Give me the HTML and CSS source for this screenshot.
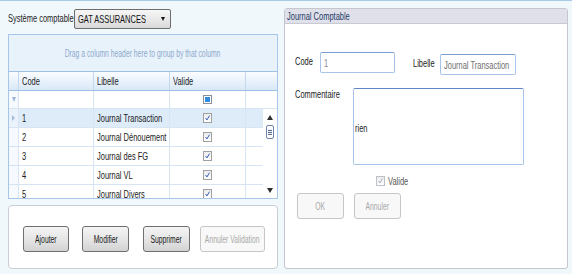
FILE: index.html
```html
<!DOCTYPE html>
<html lang="fr">
<head>
    <meta charset="UTF-8">
    <title>Journal Comptable</title>
    <link rel="stylesheet" href="styles.css">
</head>
<body>
    <div class="page">
        <!-- Left side: system picker, grid, actions -->
        <div class="left">
            <div class="picker">
                <span class="picker-label"><span class="t">Système comptable</span></span>
                <div class="select">
                    <span class="select-text"><span class="t">GAT ASSURANCES</span></span>
                    <span class="caret"></span>
                </div>
            </div>

            <div class="grid">
                <div class="group-panel"><span class="t">Drag a column header here to group by that column</span></div>
                <div class="row head">
                    <div class="ind"></div>
                    <div class="cell"><span class="t">Code</span></div>
                    <div class="cell"><span class="t">Libelle</span></div>
                    <div class="cell"><span class="t">Valide</span></div>
                    <div class="cell"></div>
                </div>
                <div class="row filter">
                    <div class="ind"><span class="funnel"></span></div>
                    <div class="cell"></div>
                    <div class="cell"></div>
                    <div class="cell center"><span class="tri-box"></span></div>
                    <div class="cell"></div>
                </div>
                <div class="body">
                    <div class="rows">
                        <div class="row selected">
                            <div class="ind"><span class="arrow"></span></div>
                            <div class="cell"><span class="t">1</span></div>
                            <div class="cell"><span class="t">Journal Transaction</span></div>
                            <div class="cell center"><span class="check"><svg viewBox="0 0 9 9"><polyline points="2,4.5 3.8,7 7,1.5"/></svg></span></div>
                            <div class="cell"></div>
                        </div>
                        <div class="row">
                            <div class="ind"></div>
                            <div class="cell"><span class="t">2</span></div>
                            <div class="cell"><span class="t">Journal Dénouement</span></div>
                            <div class="cell center"><span class="check"><svg viewBox="0 0 9 9"><polyline points="2,4.5 3.8,7 7,1.5"/></svg></span></div>
                            <div class="cell"></div>
                        </div>
                        <div class="row">
                            <div class="ind"></div>
                            <div class="cell"><span class="t">3</span></div>
                            <div class="cell"><span class="t">Journal des FG</span></div>
                            <div class="cell center"><span class="check"><svg viewBox="0 0 9 9"><polyline points="2,4.5 3.8,7 7,1.5"/></svg></span></div>
                            <div class="cell"></div>
                        </div>
                        <div class="row">
                            <div class="ind"></div>
                            <div class="cell"><span class="t">4</span></div>
                            <div class="cell"><span class="t">Journal VL</span></div>
                            <div class="cell center"><span class="check"><svg viewBox="0 0 9 9"><polyline points="2,4.5 3.8,7 7,1.5"/></svg></span></div>
                            <div class="cell"></div>
                        </div>
                        <div class="row">
                            <div class="ind"></div>
                            <div class="cell"><span class="t">5</span></div>
                            <div class="cell"><span class="t">Journal Divers</span></div>
                            <div class="cell center"><span class="check"><svg viewBox="0 0 9 9"><polyline points="2,4.5 3.8,7 7,1.5"/></svg></span></div>
                            <div class="cell"></div>
                        </div>
                    </div>
                    <div class="scrollbar">
                        <span class="sb-up"></span>
                        <span class="sb-thumb"></span>
                        <span class="sb-fill"></span>
                        <span class="sb-down"></span>
                    </div>
                </div>
            </div>

            <div class="actions">
                <button class="btn b-add"><span class="t">Ajouter</span></button>
                <button class="btn b-edit"><span class="t">Modifier</span></button>
                <button class="btn b-del"><span class="t">Supprimer</span></button>
                <button class="btn b-undo" disabled><span class="t">Annuler Validation</span></button>
            </div>
        </div>

        <!-- Right side: detail form -->
        <div class="panel">
            <div class="panel-title"><span class="t">Journal Comptable</span></div>
            <div class="form">
                <div class="line">
                    <span class="lbl"><span class="t">Code</span></span>
                    <div class="input code"><span class="t">1</span></div>
                    <span class="lbl libelle"><span class="t">Libelle</span></span>
                    <div class="input lib"><span class="t">Journal Transaction</span></div>
                </div>
                <div class="line comment">
                    <span class="lbl"><span class="t">Commentaire</span></span>
                    <div class="textarea"><span class="t">rien</span></div>
                </div>
                <div class="valid">
                    <span class="check dim"><svg viewBox="0 0 9 9"><polyline points="2,4.5 3.8,7 7,1.5"/></svg></span>
                    <span class="t">Valide</span>
                </div>
                <div class="form-buttons">
                    <button class="btn" disabled><span class="t">OK</span></button>
                    <button class="btn" disabled><span class="t">Annuler</span></button>
                </div>
            </div>
        </div>
    </div>
</body>
</html>
```

FILE: styles.css
```css
* {
    margin: 0;
    padding: 0;
    box-sizing: border-box;
}

body {
    width: 572px;
    height: 274px;
    overflow: hidden;
    background: #f1f8fc;
    border-top: 1px solid #a9c9ea;
    font-family: "Liberation Sans", Arial, sans-serif;
    font-size: 11px;
    color: #1b1b1b;
}

/* the screen font is a narrow one: squeeze the text horizontally */
.t {
    display: inline-block;
    white-space: nowrap;
    transform: scaleX(0.68);
    transform-origin: 0 50%;
}

.page {
    display: flex;
    gap: 6px;
}

.left {
    width: 278px;
    padding: 8px 0 0 8px;
    display: flex;
    flex-direction: column;
}

/* picker */
.picker {
    display: flex;
    align-items: center;
    height: 20px;
}

.picker-label {
    width: 66px;
    padding-bottom: 2px;
}

.select {
    width: 97px;
    height: 20px;
    border: 1px solid #6d6d6d;
    border-radius: 2px;
    background: linear-gradient(#f6f6f6, #e9e9e9 50%, #d9d9d9);
    display: flex;
    align-items: center;
    padding: 0 5px 0 3px;
    color: #111;
}

.select-text {
    flex: 1;
    min-width: 0;
    display: flex;
}

.caret {
    width: 0;
    height: 0;
    border-left: 2.5px solid transparent;
    border-right: 2.5px solid transparent;
    border-top: 4px solid #111;
}

/* grid */
.grid {
    margin-top: 5px;
    width: 270px;
    border: 1px solid #a7c5e8;
    background: #fff;
}

.group-panel {
    height: 36px;
    background: #e8f2fb;
    color: #8eaacb;
    font-size: 10px;
    display: flex;
    align-items: center;
    justify-content: center;
}

.group-panel .t {
    transform-origin: 50% 50%;
}

.row {
    display: grid;
    grid-template-columns: 9px 75px 76px 76px 1fr;
    height: 19px;
    border-bottom: 1px solid #d6e4f4;
}

.row.head {
    height: 20px;
    border-top: 1px solid #9fc0e6;
    border-bottom: 1px solid #9fc0e6;
    background: linear-gradient(#fbfdff, #e9f2fb 50%, #d9e8f7);
}

.row.filter {
    height: 18px;
}

.cell {
    border-left: 1px solid #d6e4f4;
    padding-left: 3px;
    display: flex;
    align-items: center;
    overflow: hidden;
}

.head .cell {
    border-left-color: #c5d7ec;
}

.cell.center {
    justify-content: center;
    padding-left: 0;
}

.ind {
    background: #f6f9fd;
    display: flex;
    align-items: center;
    justify-content: center;
}

.head .ind {
    background: none;
}

.funnel {
    width: 0;
    height: 0;
    border-left: 2.5px solid transparent;
    border-right: 2.5px solid transparent;
    border-top: 5px solid #9db8d8;
}

.arrow {
    width: 0;
    height: 0;
    border-top: 3px solid transparent;
    border-bottom: 3px solid transparent;
    border-left: 3px solid #a4bcd8;
}

.tri-box {
    display: block;
    width: 9px;
    height: 9px;
    border: 1px solid #8a8f99;
    padding: 1px;
    background: #2d8ce0;
    background-clip: content-box;
    box-shadow: inset 0 0 0 1px #fff;
}

.check {
    width: 9px;
    height: 10px;
    border: 1px solid #a0a0a0;
    background: linear-gradient(#ececec, #ffffff);
    display: flex;
}

.check svg {
    width: 100%;
    height: 100%;
    fill: none;
    stroke: #2b52b5;
    stroke-width: 1.2;
}

.check.dim {
    border-color: #bcc1c8;
}

.check.dim svg {
    stroke: #9ea7b4;
}

.body {
    display: flex;
    height: 89px;
    overflow: hidden;
}

.rows {
    flex: 1;
}

.row.selected {
    background: #deecfa;
}

.row.selected .ind {
    background: #eaf2fb;
}

.scrollbar {
    width: 14px;
    display: flex;
    flex-direction: column;
    align-items: center;
    padding: 6px 0 5px;
}

.sb-up {
    width: 0;
    height: 0;
    border-left: 3px solid transparent;
    border-right: 3px solid transparent;
    border-bottom: 5px solid #2c2c2c;
}

.sb-down {
    width: 0;
    height: 0;
    border-left: 3px solid transparent;
    border-right: 3px solid transparent;
    border-top: 5px solid #2c2c2c;
}

.sb-thumb {
    margin-top: 5px;
    width: 8px;
    height: 14px;
    border: 1px solid #6f86a8;
    border-radius: 2px;
    padding: 3px 1px;
    background: repeating-linear-gradient(#5f6f88 0 1px, #e8eef7 1px 2px);
    background-clip: content-box;
    background-color: #e8eef7;
}

.sb-fill {
    flex: 1;
}

/* action buttons */
.actions {
    margin-top: 6px;
    width: 270px;
    height: 64px;
    border: 1px solid #c9ced6;
    border-radius: 4px;
    background: #fff;
    display: flex;
    align-items: center;
    padding: 4px 0 0 14px;
}

.btn {
    width: 47px;
    height: 26px;
    border: 1px solid #6f6f6f;
    border-radius: 3px;
    background: linear-gradient(#f4f4f4, #e6e6e6 50%, #d2d2d2);
    font-family: inherit;
    font-size: 10px;
    color: #1b1b1b;
    display: flex;
    align-items: center;
    justify-content: center;
}

.btn .t {
    transform-origin: 50% 50%;
}

.b-add {
    width: 46px;
}

.b-edit {
    margin-left: 13px;
}

.b-del {
    margin-left: 14px;
}

.b-undo {
    width: 65px;
    margin-left: 10px;
}

.btn:disabled {
    border-color: #c6c6c6;
    background: #f8f8f8;
    color: #a9a9a9;
}

/* right panel */
.panel {
    margin-top: 7px;
    width: 284px;
    height: 261px;
    border: 1px solid #c4c7cf;
    border-radius: 3px;
    background: #fff;
    overflow: hidden;
}

.panel-title {
    height: 15px;
    background: #dfe0e9;
    border-bottom: 1px solid #c8cad2;
    padding-left: 2px;
    color: #243a66;
    line-height: 14px;
}

.form {
    padding: 28px 0 0 10px;
}

.line {
    display: flex;
    align-items: flex-start;
}

.lbl {
    width: 25px;
    padding-top: 3px;
}

.input {
    height: 21px;
    border: 1px solid #a8c4e8;
    border-top-color: #7c9fd0;
    border-radius: 2px;
    color: #8a8a8a;
    padding: 4px 3px 0;
    overflow: hidden;
}

.input.code {
    width: 75px;
}

.lbl.libelle {
    margin-left: 18px;
    width: 27px;
    padding-top: 5px;
}

.input.lib {
    width: 76px;
    margin-top: 2px;
    color: #6f6f6f;
}

.line.comment {
    margin-top: 13px;
}

.line.comment .lbl {
    width: 58px;
    padding-top: 0;
}

.textarea {
    width: 171px;
    height: 77px;
    border: 1px solid #a8c4e8;
    border-top-color: #5f88c8;
    border-radius: 2px;
    display: flex;
    align-items: center;
    padding: 3px 0 0 1px;
}

.valid {
    display: flex;
    align-items: center;
    gap: 3px;
    margin: 10px 0 0 81px;
    height: 12px;
    color: #555;
}

.form-buttons {
    display: flex;
    gap: 10px;
    margin: 6px 0 0 2px;
}
```
